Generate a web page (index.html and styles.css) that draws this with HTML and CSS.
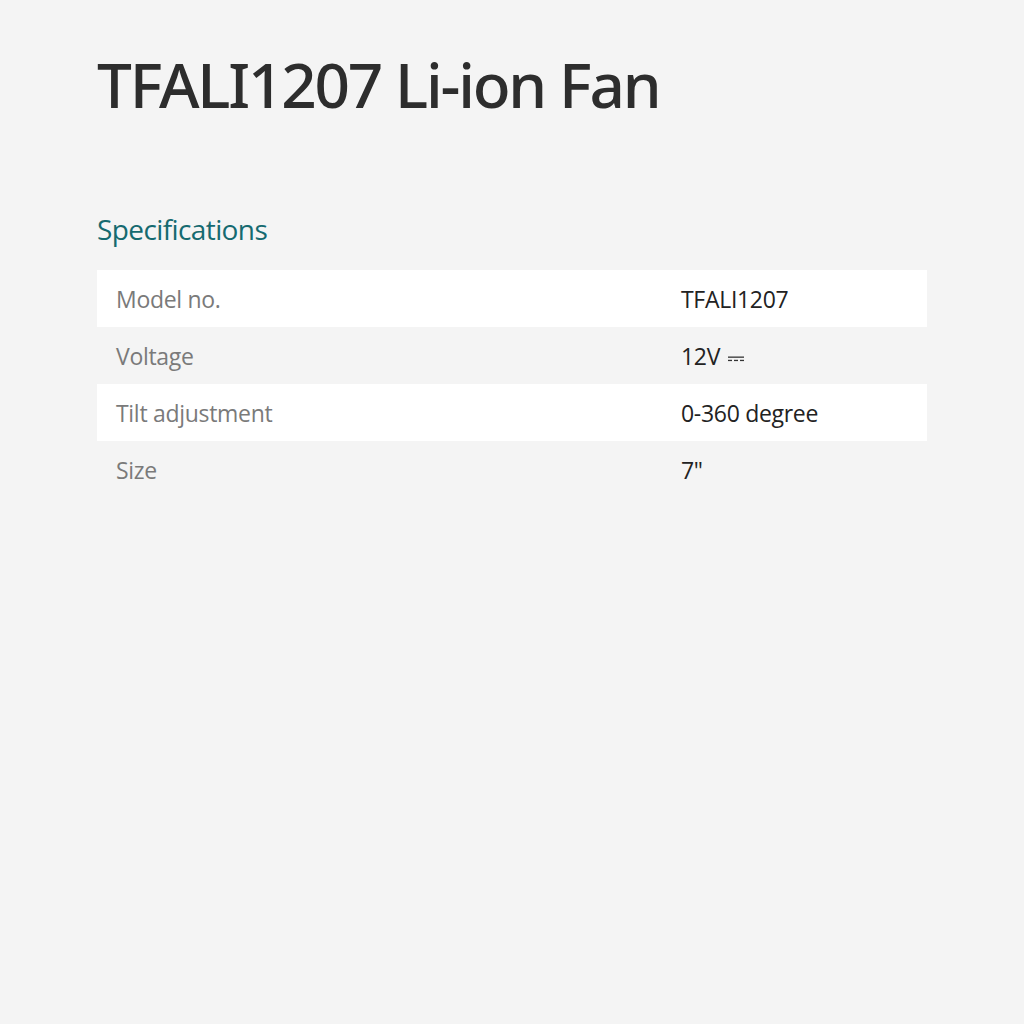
FILE: index.html
```html
<!DOCTYPE html>
<html>
<head>
<meta charset="utf-8">
<link rel="stylesheet" href="styles.css">
</head>
<body>
<main class="page">
  <h1 class="title">TFALI1207 Li-ion Fan</h1>
  <h2 class="section-title">Specifications</h2>
  <div class="specs">
    <div class="row"><div class="label">Model no.</div><div class="value">TFALI1207</div></div>
    <div class="row"><div class="label">Voltage</div><div class="value">12V <svg class="dc" width="16" height="6" viewBox="0 0 16 6" aria-label="DC"><rect x="0" y="0.5" width="16" height="1.3" fill="#333"/><rect x="0" y="3.8" width="4" height="1.3" fill="#333"/><rect x="6" y="3.8" width="4" height="1.3" fill="#333"/><rect x="12" y="3.8" width="4" height="1.3" fill="#333"/></svg></div></div>
    <div class="row"><div class="label">Tilt adjustment</div><div class="value">0-360 degree</div></div>
    <div class="row"><div class="label">Size</div><div class="value">7"</div></div>
  </div>
</main>
</body>
</html>
```
FILE: styles.css
```css
html, body {
  margin: 0;
  padding: 0;
  background: #f4f4f4;
}
body {
  font-family: "Open Sans", "Liberation Sans", sans-serif;
  width: 1024px;
  height: 1024px;
}
.page {
  padding: 46px 97px 0 97px;
}
.title {
  margin: 0;
  font-family: "Noto Sans", "Open Sans", sans-serif;
  font-weight: 500;
  font-size: 62px;
  line-height: 76px;
  color: #2d2d2d;
  letter-spacing: -2.2px;
}
.section-title {
  margin: 87px 0 0 0;
  font-weight: 500;
  font-size: 28px;
  line-height: 40px;
  color: #156a70;
  letter-spacing: -0.6px;
}
.specs {
  margin-top: 21px;
  width: 830px;
}
.row {
  display: grid;
  grid-template-columns: 565px 1fr;
  height: 57px;
  align-items: center;
  font-size: 23px;
  font-weight: 500;
}
.row:nth-child(odd) {
  background: #ffffff;
}
.label {
  padding-left: 19px;
  color: #7a7a7a;
  letter-spacing: -0.3px;
}
.value {
  padding-left: 19px;
  color: #222222;
  letter-spacing: -0.3px;
}
.dc {
  margin-left: 2px;
  vertical-align: 3px;
}
```
